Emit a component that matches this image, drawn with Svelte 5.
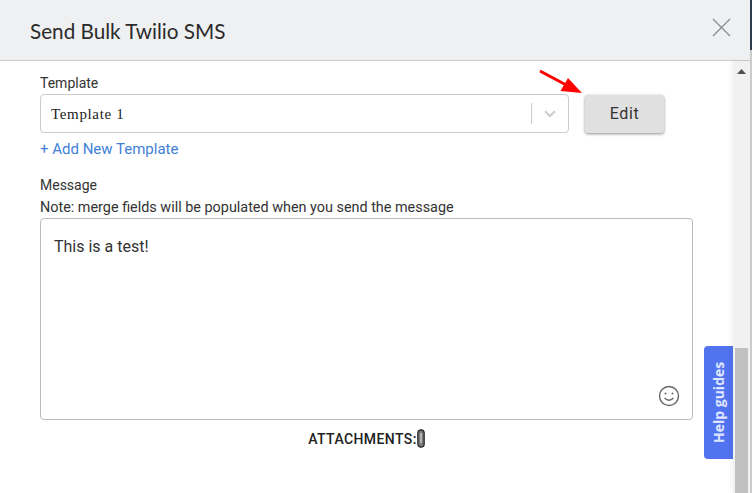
<script>
  let title = "Send Bulk Twilio SMS";
  let template = "Template 1";
  let message = "This is a test!";
</script>

<div class="page">
  <div class="modal">
    <header class="head">
      <h1>{title}</h1>
      <svg class="close" width="20" height="20" viewBox="0 0 20 20">
        <path d="M2 2 L19 19 M19 2 L2 19" stroke="#8a8d91" stroke-width="1.3" fill="none" />
      </svg>
    </header>

    <div class="body">
      <main class="content">
        <div class="label">Template</div>
        <div class="row">
          <div class="select">
            <span class="value">{template}</span>
            <span class="sep"></span>
            <svg class="chev" width="12" height="8" viewBox="0 0 12 8">
              <path d="M1 1.2 L6 6 L11 1.2" stroke="#ccc" stroke-width="2" fill="none" />
            </svg>
          </div>
          <button class="edit">Edit</button>
          <svg class="arrow" width="48" height="30" viewBox="0 0 48 30">
            <path d="M2 2 L32 18" stroke="#f00" stroke-width="3" fill="none" />
            <path d="M44 24 L22.5 22 L30 9 Z" fill="#f00" />
          </svg>
        </div>
        <a class="add" href="#add">+ Add New Template</a>

        <div class="label msg">Message</div>
        <div class="note">Note: merge fields will be populated when you send the message</div>
        <div class="textarea">
          <p>{message}</p>
          <svg class="smile" width="22" height="22" viewBox="0 0 22 22">
            <circle cx="11" cy="11" r="9.5" stroke="#666" stroke-width="1.4" fill="none" />
            <circle cx="7.5" cy="8.6" r="1" fill="#666" />
            <circle cx="14.5" cy="8.6" r="1" fill="#666" />
            <path d="M6.5 13 Q11 17.5 15.5 13" stroke="#666" stroke-width="1.4" fill="none" />
          </svg>
        </div>
        <div class="attach">
          <span>ATTACHMENTS:</span>
          <svg width="8" height="19" viewBox="0 0 8 19">
            <rect x="0.8" y="0.8" width="6.4" height="17.4" rx="3.2" fill="#777" stroke="#222" stroke-width="1.2" />
            <path d="M4 4 V14" stroke="#ddd" stroke-width="1.2" />
          </svg>
        </div>
      </main>

      <button class="help">Help guides</button>

      <div class="scrollbar">
        <svg class="up" width="9" height="5" viewBox="0 0 9 5"><path d="M4.5 0 L9 5 H0 Z" fill="#505050" /></svg>
        <div class="thumb"></div>
      </div>
    </div>
  </div>
  <div class="edge"></div>
</div>

<style>
  :global(body) {
    margin: 0;
    background: #fff;
  }

  .page {
    width: 752px;
    height: 493px;
    display: flex;
    overflow: hidden;
  }

  .modal {
    width: 750px;
    flex: none;
    display: flex;
    flex-direction: column;
    font-family: Roboto, "Liberation Sans", sans-serif;
    color: #333;
  }

  /* page behind the modal, dark nav on top */
  .edge {
    width: 2px;
    flex: none;
    background: linear-gradient(#2f3a4a 50px, #ccc 50px);
  }

  .head {
    height: 60px;
    flex: none;
    display: flex;
    align-items: center;
    justify-content: space-between;
    padding: 0 19px 0 30px;
    background: #eff0f2;
    border-bottom: 1px solid #ccc;
  }

  h1 {
    margin: 2px 0 0;
    font-family: Lato, "Liberation Sans", sans-serif;
    font-size: 20.7px;
    font-weight: 400;
    color: #2b2b2b;
  }

  .close {
    margin-top: -6px;
  }

  .body {
    flex: 1;
    display: flex;
    position: relative;
    min-height: 0;
  }

  .content {
    flex: 1;
    padding: 14px 0 0 40px;
    min-width: 0;
  }

  .label {
    font-size: 14px;
    line-height: 17px;
    color: #333;
  }

  .row {
    display: flex;
    align-items: center;
    gap: 16px;
    margin-top: 2px;
    position: relative;
  }

  .select {
    width: 529px;
    height: 39px;
    box-sizing: border-box;
    display: flex;
    align-items: center;
    border: 1px solid #ccc;
    border-radius: 4px;
    padding-left: 10px;
  }

  .value {
    flex: 1;
    font-family: "Liberation Serif", serif;
    font-size: 15px;
    letter-spacing: 0.65px;
    color: #222;
    padding-top: 2px;
  }

  .sep {
    width: 1px;
    height: 21px;
    background: #ccc;
    margin-right: 12px;
  }

  .chev {
    margin-right: 12px;
  }

  .edit {
    width: 79px;
    height: 38px;
    border: none;
    border-radius: 3px;
    background: #e0e0e0;
    box-shadow: 0 1px 3px rgba(0, 0, 0, 0.45);
    font-family: Roboto, "Liberation Sans", sans-serif;
    font-size: 16px;
    letter-spacing: 0.6px;
    color: #333;
    padding: 0;
  }

  .arrow {
    position: absolute;
    left: 498px;
    top: -25px;
  }

  .add {
    display: block;
    margin-top: 7px;
    font-size: 15px;
    line-height: 18px;
    color: #3f7fd8;
    text-decoration: none;
  }

  .msg {
    margin-top: 19px;
  }

  .note {
    margin-top: 5px;
    font-size: 14.4px;
    line-height: 17px;
    color: #333;
  }

  .textarea {
    width: 653px;
    height: 202px;
    box-sizing: border-box;
    margin-top: 2px;
    border: 1px solid #bbb;
    border-radius: 4px;
    position: relative;
    padding: 18px 13px;
  }

  .textarea p {
    margin: 0;
    font-size: 16px;
    line-height: 20px;
    color: #333;
  }

  .smile {
    position: absolute;
    right: 12px;
    bottom: 12px;
  }

  .attach {
    width: 653px;
    margin-top: 9px;
    display: flex;
    justify-content: center;
    align-items: center;
    font-size: 14px;
    font-weight: 500;
    color: #222;
    letter-spacing: 0.4px;
  }

  .help {
    position: absolute;
    right: 17px;
    top: 285px;
    width: 29px;
    height: 113px;
    padding: 0;
    border: none;
    border-radius: 0 4px 4px 0;
    background: #5273f0;
    color: #dfe6ff;
    font-family: "Open Sans", "Liberation Sans", sans-serif;
    font-size: 14px;
    font-weight: 700;
    writing-mode: vertical-rl;
    transform: rotate(180deg);
  }

  .scrollbar {
    width: 17px;
    flex: none;
    background: #f1f1f1;
    position: relative;
    box-shadow: -3px 0 5px rgba(0, 0, 0, 0.04);
  }

  .up {
    position: absolute;
    top: 8px;
    left: 4px;
  }

  .thumb {
    position: absolute;
    left: 2px;
    top: 287px;
    bottom: 0;
    width: 13px;
    background: #c1c1c1;
  }
</style>
